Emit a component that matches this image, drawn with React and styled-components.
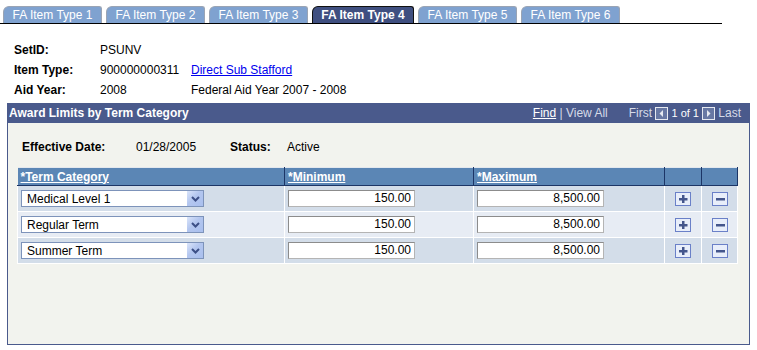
import React from "react";
import styled, { createGlobalStyle } from "styled-components";

const GlobalStyle = createGlobalStyle`
  body {
    margin: 0;
    background: #ffffff;
    font-family: "Liberation Sans", Arial, sans-serif;
    font-size: 12px;
    color: #000;
  }
`;

const tabs = [
  "FA Item Type 1",
  "FA Item Type 2",
  "FA Item Type 3",
  "FA Item Type 4",
  "FA Item Type 5",
  "FA Item Type 6",
];

const rows = [
  { term: "Medical Level 1", min: "150.00", max: "8,500.00" },
  { term: "Regular Term", min: "150.00", max: "8,500.00" },
  { term: "Summer Term", min: "150.00", max: "8,500.00" },
];

const Page = styled.div`
  width: 757px;
  height: 350px;
  padding-top: 6px;
  box-sizing: border-box;
`;

const TabBar = styled.div`
  display: flex;
  gap: 4px;
  width: 719px;
  padding-left: 3px;
  border-bottom: 1px solid #000;
  height: 17px;
`;

const Tab = styled.div`
  width: ${(p) => (p.$active ? "102px" : "99px")};
  height: 17px;
  box-sizing: border-box;
  background: ${(p) => (p.$active ? "#3f4f80" : "#7fa2d0")};
  border: 1px solid ${(p) => (p.$active ? "#111" : "#9aa4b4")};
  border-bottom: none;
  border-radius: 6px 3px 0 0;
  color: #fff;
  font-weight: ${(p) => (p.$active ? "bold" : "normal")};
  font-size: 12px;
  line-height: 16px;
  text-align: center;
  white-space: nowrap;
`;

const Info = styled.div`
  display: grid;
  grid-template-columns: 86px 91px auto;
  grid-auto-rows: 20px;
  align-items: center;
  padding: 16px 0 0 14px;
  height: 60px;
`;

const Label = styled.span`
  font-weight: bold;
`;

const LinkText = styled.a`
  color: #0000ee;
  text-decoration: underline;
`;

const Panel = styled.div`
  margin: 3px 0 0 7px;
  width: 743px;
  height: 242px;
  box-sizing: border-box;
  border: 1px solid #4a5a8c;
  background: #f2f3ee;
`;

const PanelHead = styled.div`
  display: flex;
  align-items: center;
  height: 20px;
  background: #4a5a8c;
  color: #fff;
  padding: 0 8px 0 1px;
  margin-top: -1px;
`;

const PanelTitle = styled.span`
  font-weight: bold;
  flex: 1;
`;

const Nav = styled.div`
  display: flex;
  align-items: center;
  font-size: 12px;
  color: #d6dbe8;
`;

const NavLink = styled.span`
  color: #fff;
  text-decoration: underline;
`;

const NavFirst = styled.span`
  margin-left: 21px;
`;

const Count = styled.span`
  color: #fff;
  font-size: 11px;
  margin: 0 3px;
`;

const ArrowBox = styled.svg`
  display: block;
`;

const EffRow = styled.div`
  display: flex;
  align-items: center;
  height: 20px;
  margin: 14px 0 0 14px;
`;

const EffCell = styled.span`
  width: ${(p) => p.$w}px;
  font-weight: ${(p) => (p.$bold ? "bold" : "normal")};
`;

const Grid = styled.table`
  border-collapse: collapse;
  border-spacing: 0;
  margin: 10px 0 0 9px;
  table-layout: fixed;
  width: 720px;
`;

const Th = styled.th`
  width: ${(p) => p.$w}px;
  height: 18px;
  box-sizing: border-box;
  background: #5b86b5;
  border-right: 1px solid #1c3566;
  border-bottom: 1px solid #1c3566;
  border-top: 1px solid #e4e8ee;
  text-align: left;
  padding: 0;
  color: #fff;
  font-weight: bold;
  font-size: 12px;
`;

const HeadLink = styled.span`
  text-decoration: underline;
  margin-left: 3px;
`;

const Td = styled.td`
  height: 25px;
  background: ${(p) => (p.$odd ? "#d3dde9" : "#e7ecf4")};
  border: 1px solid #fff;
  border-top: none;
  padding: 0;
  text-align: ${(p) => (p.$center ? "center" : "left")};
  vertical-align: middle;
`;

const Select = styled.div`
  display: flex;
  align-items: center;
  width: 183px;
  height: 17px;
  margin-left: 3px;
  box-sizing: border-box;
  border: 1px solid #7d93ba;
  background: #fff;
  padding-left: 5px;
  font-size: 12px;
`;

const SelectText = styled.span`
  flex: 1;
`;

const DropBtn = styled.span`
  width: 16px;
  height: 15px;
  background: linear-gradient(135deg, #dbe5fa 0%, #b3c6ef 45%, #a9bfee 100%);
  display: flex;
  align-items: center;
  justify-content: center;
`;

const NumInput = styled.div`
  width: 127px;
  height: 17px;
  margin-left: 3px;
  box-sizing: border-box;
  border: 1px solid #b4b4b4;
  border-top-color: #8c8c8c;
  border-left-color: #8c8c8c;
  background: #fff;
  text-align: right;
  padding-right: 3px;
  line-height: 15px;
  font-size: 12px;
`;

const RowBtn = styled.span`
  display: inline-flex;
  align-items: center;
  justify-content: center;
  width: 16px;
  height: 14px;
  box-sizing: border-box;
  border: 1px solid #6a80c8;
  background: #e8eefa;
  vertical-align: middle;
`;

const Chevron = () => (
  <svg width="9" height="6" viewBox="0 0 9 6">
    <path d="M1 1 L4.5 4.5 L8 1" stroke="#3c4f86" strokeWidth="2" fill="none" />
  </svg>
);

const PlusIcon = () => (
  <svg width="10" height="10" viewBox="0 0 10 10">
    <rect x="4" y="1" width="2.5" height="8" fill="#44568c" />
    <rect x="1" y="4" width="8.5" height="2.5" fill="#44568c" />
  </svg>
);

const MinusIcon = () => (
  <svg width="10" height="10" viewBox="0 0 10 10">
    <rect x="1" y="4" width="9" height="2.5" fill="#44568c" />
  </svg>
);

const NavArrow = ({ dir }) => (
  <ArrowBox width="13" height="13" viewBox="0 0 13 13">
    <rect x="0.5" y="0.5" width="12" height="12" fill="#6878a4" stroke="#e6e9f1" />
    {dir === "left" ? (
      <path d="M8 3 L8 10 L4.5 6.5 Z" fill="#e6e9f1" />
    ) : (
      <path d="M5 3 L5 10 L8.5 6.5 Z" fill="#e6e9f1" />
    )}
  </ArrowBox>
);

export default function App() {
  return (
    <Page>
      <GlobalStyle />
      <TabBar>
        {tabs.map((t, i) => (
          <Tab key={t} $active={i === 3}>
            {t}
          </Tab>
        ))}
      </TabBar>

      <Info>
        <Label>SetID:</Label>
        <span>PSUNV</span>
        <span />
        <Label>Item Type:</Label>
        <span>900000000311</span>
        <LinkText>Direct Sub Stafford</LinkText>
        <Label>Aid Year:</Label>
        <span>2008</span>
        <span>Federal Aid Year 2007 - 2008</span>
      </Info>

      <Panel>
        <PanelHead>
          <PanelTitle>Award Limits by Term Category</PanelTitle>
          <Nav>
            <NavLink>Find</NavLink>
            <span>&nbsp;|&nbsp;View All</span>
            <NavFirst>First&nbsp;</NavFirst>
            <NavArrow dir="left" />
            <Count>1 of 1</Count>
            <NavArrow dir="right" />
            <span>&nbsp;Last</span>
          </Nav>
        </PanelHead>

        <EffRow>
          <EffCell $w={114} $bold>Effective Date:</EffCell>
          <EffCell $w={94}>01/28/2005</EffCell>
          <EffCell $w={57} $bold>Status:</EffCell>
          <EffCell $w={60}>Active</EffCell>
        </EffRow>

        <Grid>
          <colgroup>
            <col style={{ width: 267 }} />
            <col style={{ width: 189 }} />
            <col style={{ width: 191 }} />
            <col style={{ width: 37 }} />
            <col style={{ width: 36 }} />
          </colgroup>
          <thead>
            <tr>
              <Th><HeadLink>*Term Category</HeadLink></Th>
              <Th><HeadLink>*Minimum</HeadLink></Th>
              <Th><HeadLink>*Maximum</HeadLink></Th>
              <Th />
              <Th />
            </tr>
          </thead>
          <tbody>
            {rows.map((r, i) => (
              <tr key={r.term}>
                <Td $odd={i % 2 === 0}>
                  <Select>
                    <SelectText>{r.term}</SelectText>
                    <DropBtn><Chevron /></DropBtn>
                  </Select>
                </Td>
                <Td $odd={i % 2 === 0}>
                  <NumInput>{r.min}</NumInput>
                </Td>
                <Td $odd={i % 2 === 0}>
                  <NumInput>{r.max}</NumInput>
                </Td>
                <Td $odd={i % 2 === 0} $center>
                  <RowBtn><PlusIcon /></RowBtn>
                </Td>
                <Td $odd={i % 2 === 0} $center>
                  <RowBtn><MinusIcon /></RowBtn>
                </Td>
              </tr>
            ))}
          </tbody>
        </Grid>
      </Panel>
    </Page>
  );
}
